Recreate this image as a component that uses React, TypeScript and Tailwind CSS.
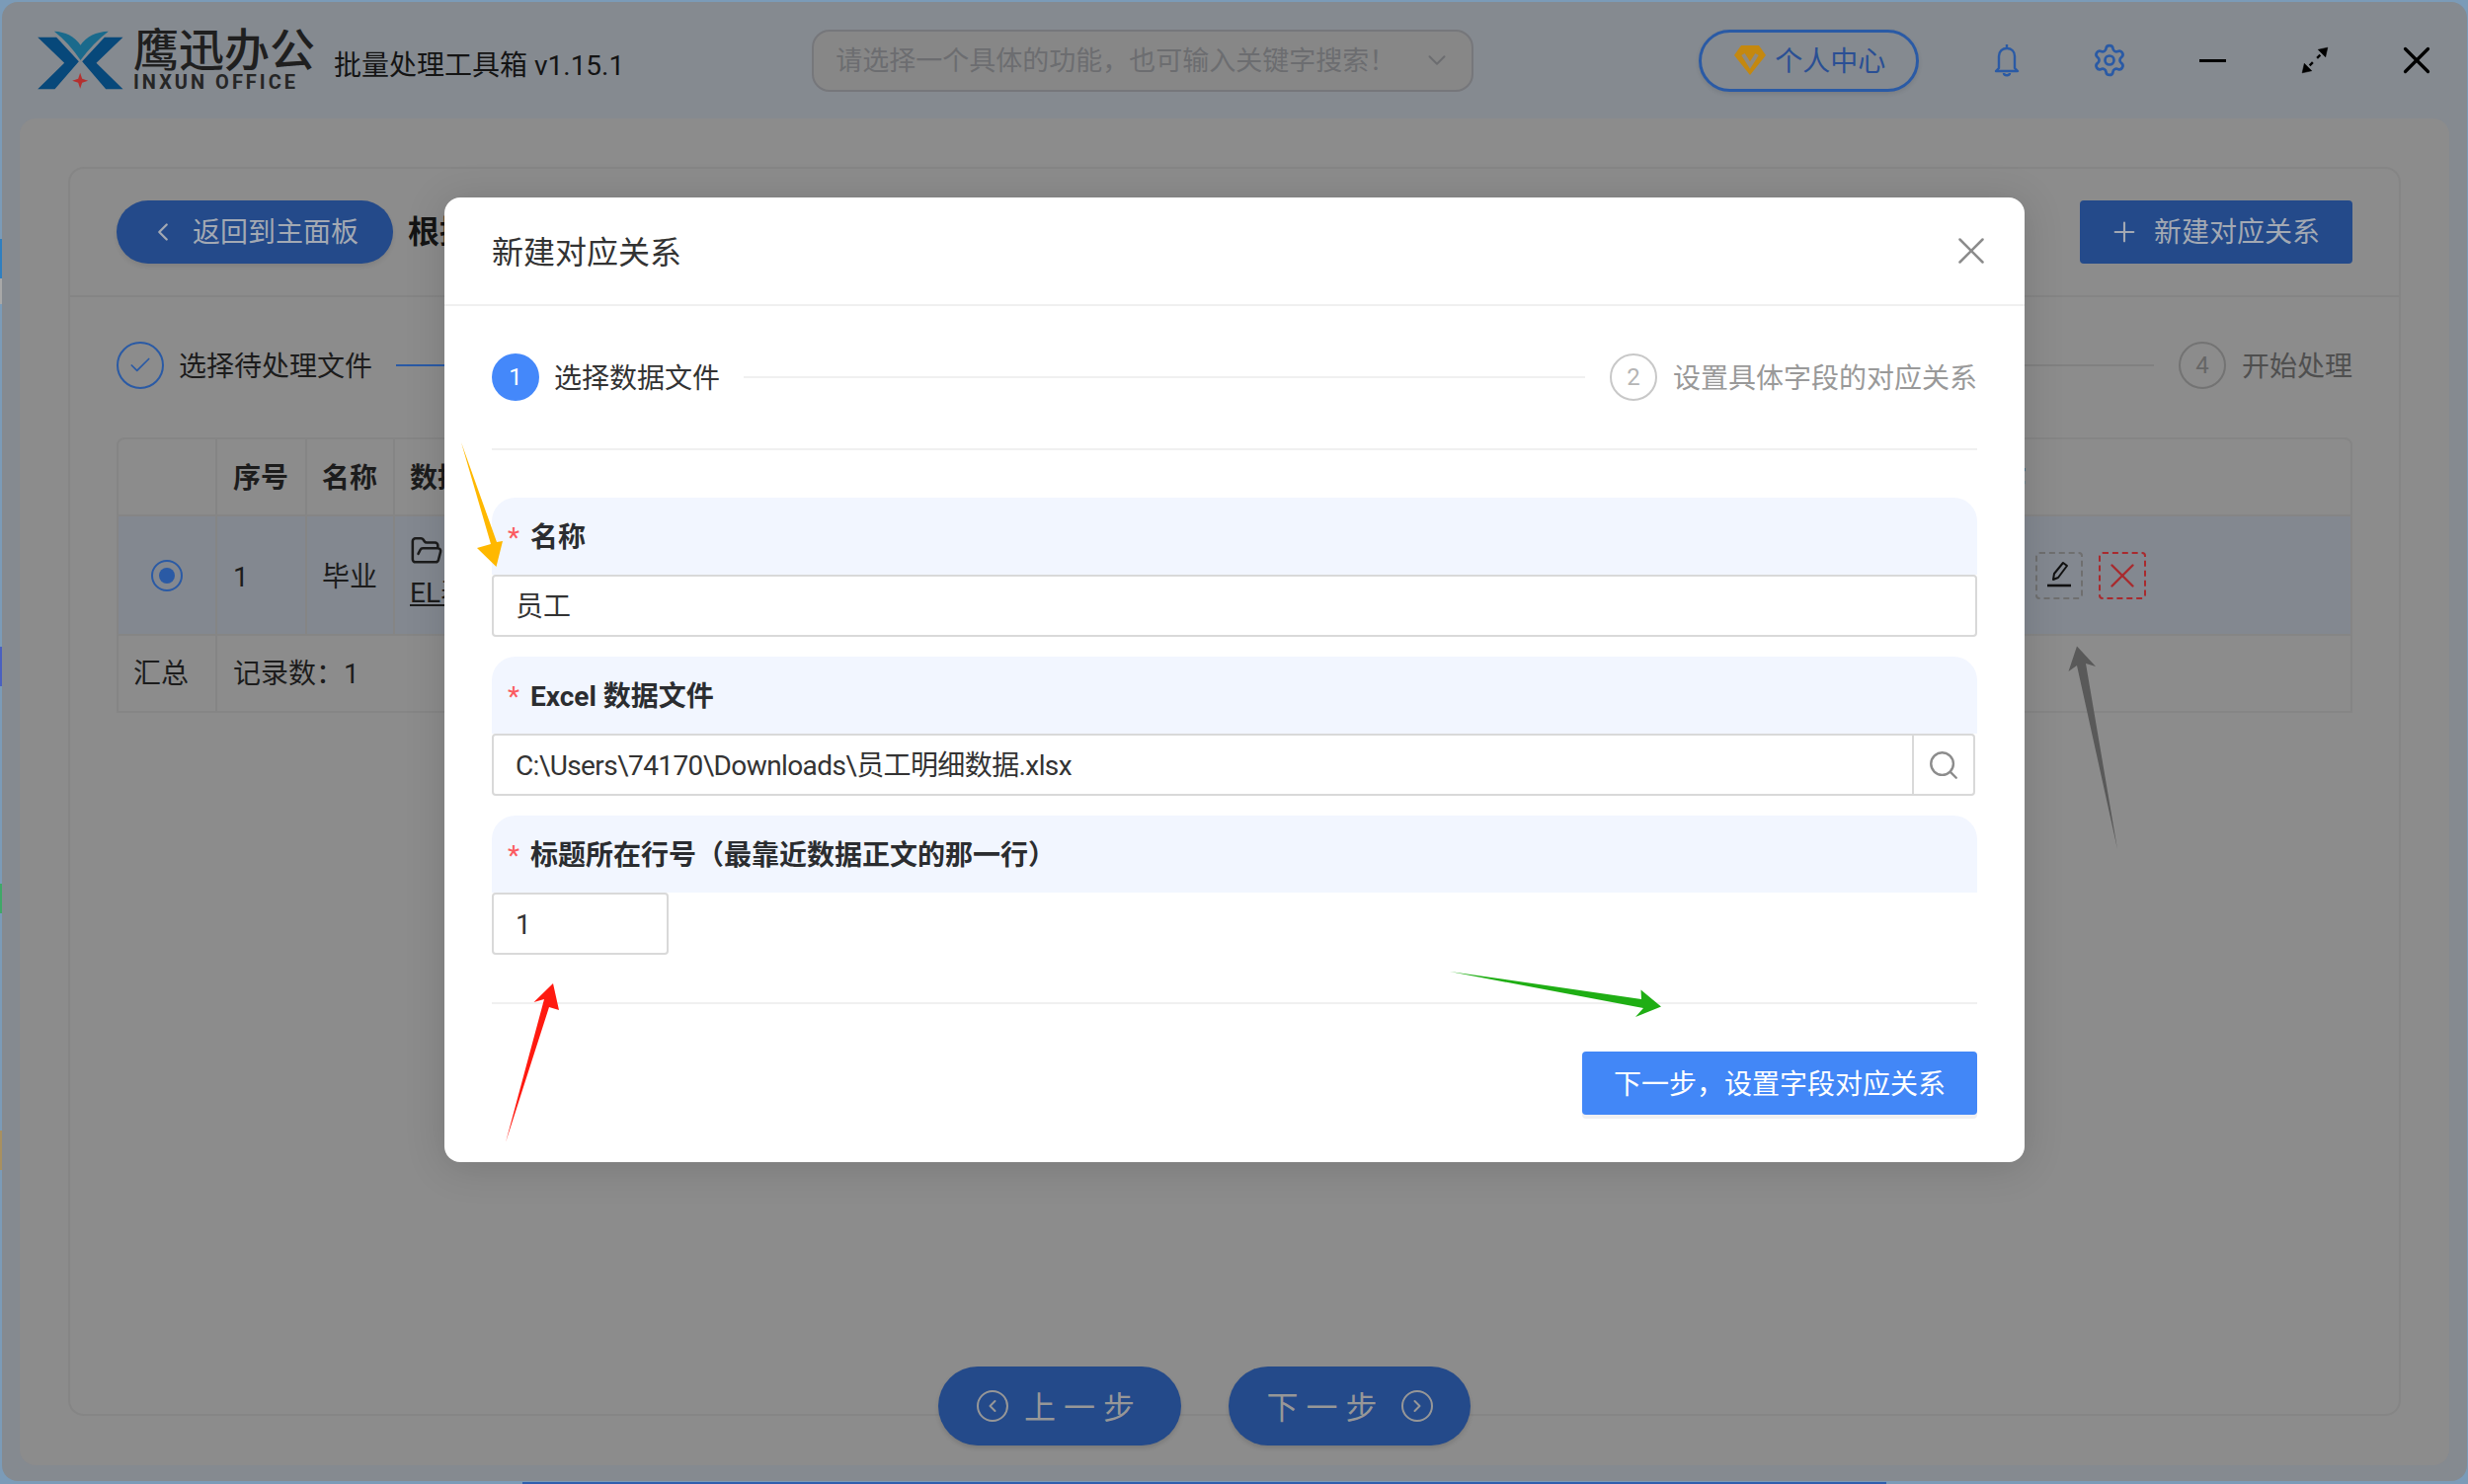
import { ChevronDown, ChevronLeft, ChevronRight, FolderOpen, Plus, Search, Settings, X, Check } from 'lucide-react';

function Logo() {
  return (
    <svg width="87" height="60" viewBox="113 88 260 180" className="shrink-0">
      <path d="M163 90 Q215 92 243 132 Q271 92 328 90 Q282 125 243 178 Q208 125 163 90Z" fill="#1a6a8c" />
      <path d="M113 108 H170 L238 182 L165 266 H113 L194 186Z" fill="#07487a" />
      <path d="M372 108 H316 L248 182 L320 266 H372 L291 186Z" fill="#07487a" />
      <path d="M242 216 L248 234 L266 240 L248 246 L242 264 L236 246 L218 240 L236 234Z" fill="#b5302f" />
    </svg>
  );
}

function BellIcon() {
  return (
    <svg width="26" height="34" viewBox="0 0 26 34" fill="none" stroke="#2a5aa5" strokeWidth="2.4">
      <path d="M13 1 V5" />
      <path d="M5 25 V13 C5 8 8.5 5 13 5 C17.5 5 21 8 21 13 V25 L24 28 H2Z" strokeLinejoin="round" />
      <path d="M10 30 C10 33 16 33 16 30" />
    </svg>
  );
}

function ExpandIcon() {
  return (
    <svg width="30" height="30" viewBox="0 0 28 28" fill="#000" stroke="#000" strokeWidth="2.2">
      <path d="M16 12 L19 9" />
      <path d="M9 19 L12 16" />
      <path d="M17 4 L26 2 L24 11Z" strokeWidth="0.5" />
      <path d="M2 26 L4 17 L11 24Z" strokeWidth="0.5" />
    </svg>
  );
}

function DiamondIcon() {
  return (
    <svg width="34" height="32" viewBox="0 0 34 32">
      <path d="M8 1 H26 L33 11 L17 31 L1 11Z" fill="#c4880f" />
      <path d="M10 10 L17 21 L24 10" fill="none" stroke="#8f8a80" strokeWidth="4" />
    </svg>
  );
}

function EditIcon() {
  return (
    <svg width="28" height="32" viewBox="0 0 28 32" fill="none" stroke="#111" strokeWidth="2">
      <path d="M8 20 L9 14 L18 3 L22 6 L13 18Z" strokeLinejoin="round" />
      <path d="M2 26 H26" strokeWidth="2.6" />
    </svg>
  );
}

function Arrows() {
  return (
    <svg width="2499" height="1503" viewBox="0 0 2499 1503" className="absolute left-0 top-0 pointer-events-none">
      <path d="M467 448 L497 551 L483 555 L502.5 574 L509 548 L503 549Z" fill="#ffb800" />
      <path d="M512 1157 L556 1020 L566 1023 L560 996 L540.5 1015 L551 1012Z" fill="#ff1a10" />
      <path d="M1468 984 L1664 1021 L1656 1030 L1682 1019.5 L1661.5 1002.5 L1662 1012Z" fill="#1fae14" />
      <path d="M2144 860 L2112 672 L2122 675 L2103 654.5 L2094.5 680 L2103 674Z" fill="#595959" />
    </svg>
  );
}

function StepCircle({ children, className }: { children: React.ReactNode; className: string }) {
  return (
    <div className={`w-[48px] h-[48px] rounded-full flex items-center justify-center shrink-0 text-[24px] ${className}`}>
      {children}
    </div>
  );
}

function FieldLabel({ text }: { text: string }) {
  return (
    <div className="h-[78px] bg-[#f2f6ff] rounded-t-[24px] flex items-center pl-[16px] pt-[4px] text-[28px] font-bold text-[#2b2d30]">
      <span className="w-[23px] text-[#fb5a60] font-normal">*</span>
      <span>{text}</span>
    </div>
  );
}

function Modal() {
  return (
    <div className="absolute left-[450px] top-[200px] w-[1600px] h-[977px] bg-white rounded-[16px] shadow-[0_4px_40px_rgba(0,0,0,0.15)]">
      <div className="h-[110px] border-b-2 border-[#f0f0f0] flex items-center justify-between pl-[48px] pr-[31px]">
        <span className="text-[32px] text-[#333] pt-[4px]">新建对应关系</span>
        <X size={46} strokeWidth={1.3} className="text-[#8c8c8c]" />
      </div>
      <div className="px-[48px]">
        <div className="pt-[48px] pb-[48px] border-b-2 border-[#f0f0f0] flex items-center">
          <StepCircle className="bg-[#4488fa] text-white">1</StepCircle>
          <span className="ml-[15px] pt-[4px] text-[28px] text-[#333]">选择数据文件</span>
          <div className="flex-1 h-[2px] bg-[#f0f0f0] ml-[24px] mr-[25px]" />
          <StepCircle className="border-2 border-[#c8c8c8] text-[#b5b5b5]">2</StepCircle>
          <span className="ml-[16px] pt-[4px] text-[28px] text-[#999]">设置具体字段的对应关系</span>
        </div>

        <div className="mt-[48px]">
          <FieldLabel text="名称" />
          <div className="h-[63px] border-2 border-[#d9d9d9] rounded-[4px] flex items-center pl-[22px] pt-[2px] text-[28px] text-[#333]">
            员工
          </div>
        </div>

        <div className="mt-[20px]">
          <FieldLabel text="Excel 数据文件" />
          <div className="h-[63px] w-[1502px] border-2 border-[#d9d9d9] rounded-[4px] flex items-center pl-[22px] text-[28px] text-[#333]">
            <span className="flex-1 pt-[2px] tracking-[-0.6px]">C:\Users\74170\Downloads\员工明细数据.xlsx</span>
            <div className="w-[62px] h-full border-l-2 border-[#d9d9d9] flex items-center justify-center">
              <Search size={34} strokeWidth={1.7} className="text-[#8c8c8c]" />
            </div>
          </div>
        </div>

        <div className="mt-[20px]">
          <FieldLabel text="标题所在行号（最靠近数据正文的那一行）" />
          <div className="h-[63px] w-[179px] border-2 border-[#d9d9d9] rounded-[4px] flex items-center pl-[22px] pt-[2px] text-[28px] text-[#333]">
            1
          </div>
        </div>

        <div className="mt-[48px] border-t-2 border-[#f0f0f0] pt-[48px] flex justify-end">
          <button className="w-[400px] h-[64px] pt-[4px] bg-[#4287f7] rounded-[4px] text-white text-[28px] shadow-[0_4px_0_#f0f0f2]">
            下一步，设置字段对应关系
          </button>
        </div>
      </div>
    </div>
  );
}

export default function App() {
  return (
    <div className="relative w-[2499px] h-[1503px] overflow-hidden bg-[#7b9bb8] font-['Roboto','Noto_Sans_CJK_SC',sans-serif]">
      {/* desktop peeking out around the window */}
      <div className="absolute left-0 top-[242px] w-[2px] h-[40px] bg-[#2f7fc0]" />
      <div className="absolute left-0 top-[282px] w-[2px] h-[26px] bg-[#a8a8a8]" />
      <div className="absolute left-0 top-[655px] w-[2px] h-[40px] bg-[#4a60c0]" />
      <div className="absolute left-0 top-[895px] w-[2px] h-[30px] bg-[#3fa868]" />
      <div className="absolute left-0 top-[1145px] w-[2px] h-[40px] bg-[#a89060]" />
      <div className="absolute left-[529px] top-[1501px] w-[1381px] h-[2px] bg-[#2f5fae]" />

      <div className="absolute left-[2px] top-[2px] right-[1px] bottom-[3px] bg-[#858a90] rounded-[16px] flex flex-col">
        <header className="h-[118px] shrink-0 flex items-center pl-[36px]">
          <Logo />
          <div className="ml-[10px] flex flex-col w-[195px]">
            <span className="text-[46px] h-[44px] leading-[44px] font-medium text-[#1f1f1f] whitespace-nowrap">鹰迅办公</span>
            <span className="text-[20px] h-[20px] leading-[20px] font-bold tracking-[3px] text-[#262626] whitespace-nowrap">INXUN OFFICE</span>
          </div>
          <span className="text-[28px] text-[#141414] whitespace-nowrap ml-[8px] mt-[12px]">批量处理工具箱 v1.15.1</span>

          <div className="ml-[190px] w-[670px] h-[63px] border-2 border-[#76777b] bg-[#878787] rounded-[18px] flex items-center pl-[22px] pr-[20px] justify-between">
            <span className="text-[27px] pt-[2px] text-[#6c6d70] whitespace-nowrap">请选择一个具体的功能，也可输入关键字搜索！</span>
            <ChevronDown size={30} strokeWidth={1.6} className="text-[#6c6d70]" />
          </div>

          <div className="ml-[228px] w-[223px] h-[63px] border-[3px] border-[#2a5aa5] rounded-full flex items-center pl-[32px] gap-[8px] shadow-[0_2px_4px_rgba(0,0,0,0.1)]">
            <DiamondIcon />
            <span className="text-[28px] pt-[4px] text-[#2a4f94] whitespace-nowrap">个人中心</span>
          </div>
          <div className="ml-[76px]"><BellIcon /></div>
          <Settings size={36} strokeWidth={1.8} className="ml-[73px] text-[#2a5aa5]" />
          <div className="ml-[73px] w-[27px] h-[3px] bg-black" />
          <div className="ml-[75px]"><ExpandIcon /></div>
          <X size={46} strokeWidth={1.7} className="ml-[65px] text-black" />
        </header>

        <main className="flex-1 mx-[18px] bg-[#8c8c8c] rounded-[16px] pt-[49px] px-[49px] pb-[50px] min-h-0">
          <div className="h-full border-2 border-[#858585] rounded-[16px] flex flex-col relative">
            <div className="h-[130px] shrink-0 border-b-2 border-[#858585] flex items-center justify-between px-[47px]">
              <div className="flex items-center">
                <div className="w-[280px] h-[64px] rounded-full bg-[#244a8a] flex items-center pl-[32px] gap-[15px] text-[#a3a9b3] text-[28px] shadow-[0_3px_4px_rgba(0,0,0,0.08)]">
                  <ChevronLeft size={30} strokeWidth={1.8} />
                  <span className="pt-[2px]">返回到主面板</span>
                </div>
                <span className="ml-[15px] text-[32px] font-bold text-[#141414] whitespace-nowrap">根据</span>
              </div>
              <div className="w-[276px] h-[64px] rounded-[4px] bg-[#244a8a] flex items-center pl-[29px] gap-[14px] text-[#a3a9b3] text-[28px]">
                <Plus size={32} strokeWidth={1.6} />
                <span className="pt-[2px]">新建对应关系</span>
              </div>
            </div>

            <div className="mt-[45px] h-[48px] flex items-center px-[47px]">
              <StepCircle className="border-2 border-[#2a5aa5] text-[#2a5aa5]"><Check size={26} strokeWidth={1.6} /></StepCircle>
              <span className="ml-[15px] pt-[4px] text-[28px] text-[#1c1c1c] whitespace-nowrap">选择待处理文件</span>
              <div className="w-[60px] h-[2px] bg-[#2a5aa5] ml-[24px]" />
              <div className="flex-1 h-[2px] bg-[#808080] mr-[25px]" />
              <StepCircle className="border-2 border-[#737373] text-[#666]">4</StepCircle>
              <span className="ml-[16px] pt-[4px] text-[28px] text-[#4f4f4f] whitespace-nowrap">开始处理</span>
            </div>

            <div className="mx-[47px] mt-[49px] border-2 border-[#858585] border-t-2 rounded-t-[8px] text-[28px] text-[#1c1c1c]">
              <div className="grid grid-cols-[100px_91px_89px_1fr_385px] h-[76px] items-stretch font-bold">
                <div className="border-r-2 border-[#858585]" />
                <div className="border-r-2 border-[#858585] pl-[16px] pt-[4px] flex items-center">序号</div>
                <div className="border-r-2 border-[#858585] pl-[15px] pt-[4px] flex items-center">名称</div>
                <div className="pl-[15px] pt-[4px] flex items-center">数据</div>
                <div className="pt-[4px] flex items-center">操作</div>
              </div>
              <div className="grid grid-cols-[100px_91px_89px_1fr_385px] h-[123px] items-stretch bg-[#838890] border-y-2 border-[#858585]">
                <div className="border-r-2 border-[#858585] flex items-center justify-center">
                  <div className="w-[32px] h-[32px] rounded-full border-2 border-[#2a5aa5] flex items-center justify-center">
                    <div className="w-[16px] h-[16px] rounded-full bg-[#2a5aa5]" />
                  </div>
                </div>
                <div className="border-r-2 border-[#858585] pl-[16px] pt-[4px] flex items-center">1</div>
                <div className="border-r-2 border-[#858585] pl-[15px] pt-[4px] flex items-center">毕业</div>
                <div className="pl-[15px] flex flex-col justify-center">
                  <FolderOpen size={34} strokeWidth={1.8} className="text-[#1c1c1c] -mt-[3px]" />
                  <span className="underline mt-[6px] leading-[40px] whitespace-nowrap">EL表</span>
                </div>
                <div className="flex items-center gap-[16px] pl-[66px]">
                  <div className="w-[48px] h-[48px] shrink-0 rounded-[4px] border-2 border-dashed border-[#6f6f6f] flex items-center justify-center"><EditIcon /></div>
                  <div className="w-[48px] h-[48px] shrink-0 rounded-[4px] border-2 border-dashed border-[#a82a2e] flex items-center justify-center">
                    <X size={42} strokeWidth={1.4} className="text-[#a82a2e] shrink-0" />
                  </div>
                </div>
              </div>
              <div className="grid grid-cols-[100px_1fr] h-[76px] items-stretch">
                <div className="border-r-2 border-[#858585] pl-[15px] pt-[2px] flex items-center">汇总</div>
                <div className="pl-[16px] pt-[2px] flex items-center">记录数：1</div>
              </div>
            </div>

            <div className="flex-1" />
            <div className="absolute left-[879px] bottom-[-32px] flex gap-[48px]">
              <div className="w-[246px] h-[80px] rounded-full bg-[#244a8a] flex items-center justify-center gap-[16px] text-[32px] tracking-[8px] text-[#979797] shadow-[0_3px_4px_rgba(0,0,0,0.12)]">
                <div className="w-[32px] h-[32px] rounded-full border-2 border-[#979797] flex items-center justify-center"><ChevronLeft size={20} strokeWidth={2.4} /></div>
                <span className="pt-[4px]">上一步</span>
              </div>
              <div className="w-[245px] h-[80px] rounded-full bg-[#244a8a] flex items-center justify-center gap-[16px] text-[32px] tracking-[8px] text-[#979797] shadow-[0_3px_4px_rgba(0,0,0,0.12)]">
                <span className="pt-[4px]">下一步</span>
                <div className="w-[32px] h-[32px] rounded-full border-2 border-[#979797] flex items-center justify-center"><ChevronRight size={20} strokeWidth={2.4} /></div>
              </div>
            </div>
          </div>
        </main>
        <div className="h-[16px] shrink-0" />
      </div>

      <Modal />
      <Arrows />
    </div>
  );
}
